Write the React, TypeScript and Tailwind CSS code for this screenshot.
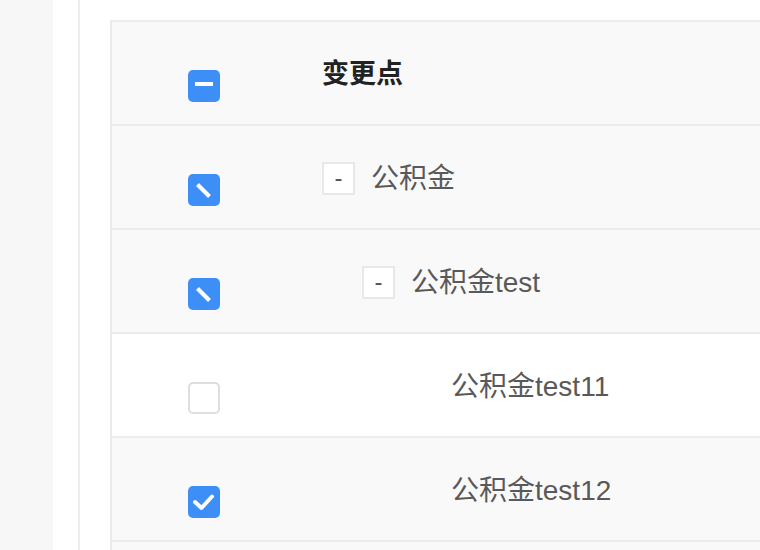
import type { ReactNode } from "react";

type CheckState = "checked" | "unchecked" | "partial" | "header";

type Row = {
  label: string;
  level: number;
  expandable: boolean;
  check: CheckState;
  bg: string;
};

const rows: Row[] = [
  { label: "公积金", level: 0, expandable: true, check: "partial", bg: "bg-[#f9f9f9]" },
  { label: "公积金test", level: 1, expandable: true, check: "partial", bg: "bg-[#f9f9f9]" },
  { label: "公积金test11", level: 2, expandable: false, check: "unchecked", bg: "bg-white" },
  { label: "公积金test12", level: 2, expandable: false, check: "checked", bg: "bg-[#f9f9f9]" },
  { label: "", level: 2, expandable: false, check: "unchecked", bg: "bg-[#f9f9f9]" }
];

function Checkbox({ state }: { state: CheckState }) {
  if (state === "unchecked") {
    return <span className="block h-8 w-8 rounded-[5px] border-2 border-[#dedede] bg-white" />;
  }
  return (
    <span className="block h-8 w-8 rounded-[5px] bg-[#3d8ef6]">
      <svg width="32" height="32" viewBox="0 0 32 32" fill="none" stroke="white" strokeWidth="4">
        {state === "header" && <path d="M7 14h18" strokeLinecap="butt" />}
        {state === "partial" && <path d="M9.5 10.5 21.5 22.5" strokeLinecap="butt" />}
        {state === "checked" && <path d="M7 16l6.5 6L24 10.5" strokeLinecap="round" strokeLinejoin="round" />}
      </svg>
    </span>
  );
}

function TableRow({ check, bg, children }: { check: CheckState; bg: string; children: ReactNode }) {
  return (
    <div className={`flex h-[104px] shrink-0 border-b-2 border-[#ebebeb] ${bg}`}>
      <div className="w-[210px] shrink-0 pl-[76px] pt-[48px]">
        <Checkbox state={check} />
      </div>
      <div className="flex-1 pt-[36px]">{children}</div>
    </div>
  );
}

export default function App() {
  return (
    <div
      className="flex h-[550px] w-[760px] overflow-hidden bg-white"
      style={{ fontFamily: '"Liberation Sans", "Noto Sans CJK SC", sans-serif' }}
    >
      <div className="w-[53px] shrink-0 bg-[#f7f7f7]" />
      <div className="w-[25px] shrink-0 bg-white" />
      <div className="w-[2px] shrink-0 bg-[#ededed]" />
      <div className="flex-1 pl-[30px] pt-[20px]">
        <div className="flex w-[700px] flex-col border-l-2 border-t-2 border-[#ebebeb]">
          <TableRow check="header" bg="bg-[#f9f9f9]">
            <div className="flex h-[33px] items-center text-[27px] font-bold text-[#222]">变更点</div>
          </TableRow>
          {rows.map((row, i) => (
            <TableRow key={i} check={row.check} bg={row.bg}>
              {row.label && (
                <div className="flex h-[33px] items-center" style={{ paddingLeft: row.level * 40 }}>
                  {row.expandable ? (
                    <span className="flex h-[33px] w-[33px] shrink-0 items-center justify-center border-2 border-[#e8e8e8] bg-white pb-[2px] text-[24px] leading-none text-[#555]">
                      -
                    </span>
                  ) : (
                    <span className="h-[33px] w-[33px] shrink-0" />
                  )}
                  <span className="ml-[16px] text-[28px] text-[#595959]">{row.label}</span>
                </div>
              )}
            </TableRow>
          ))}
        </div>
      </div>
    </div>
  );
}
